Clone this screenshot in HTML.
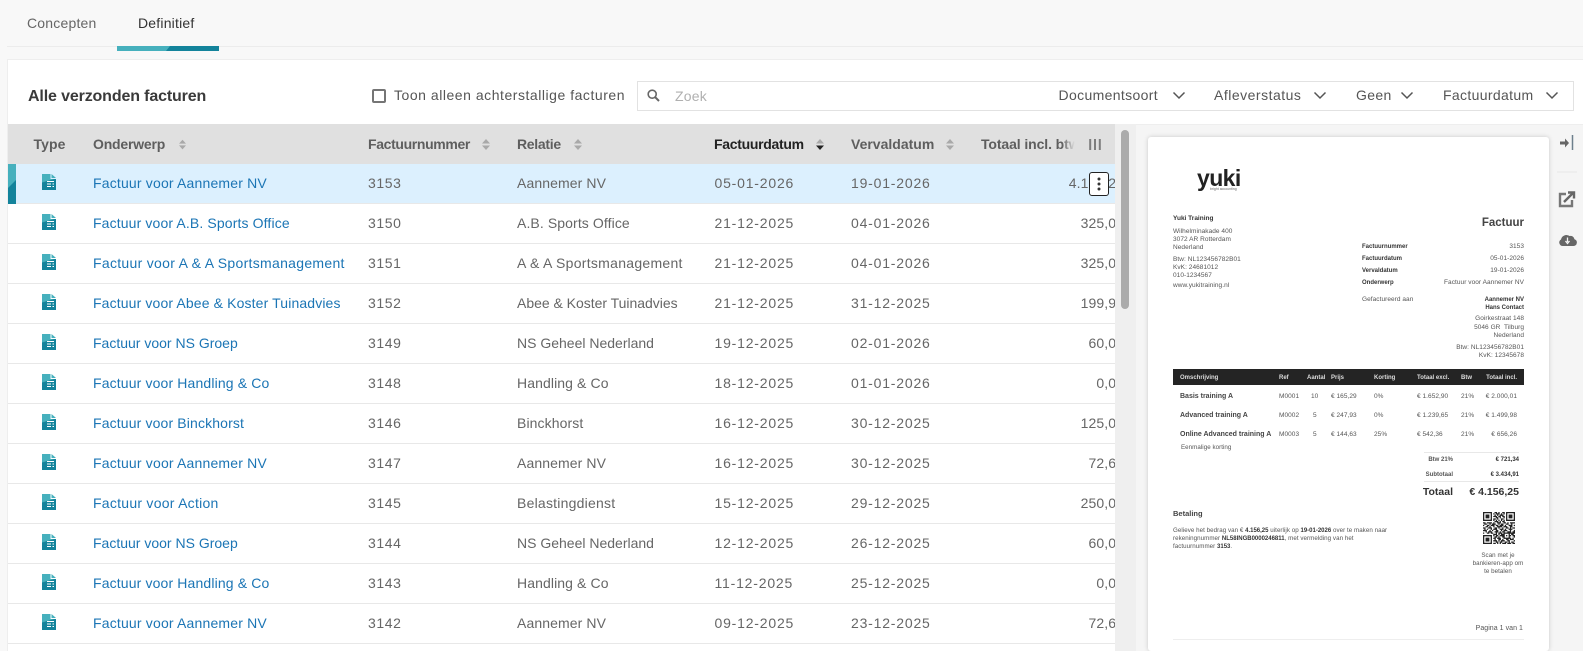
<!DOCTYPE html>
<html><head><meta charset="utf-8"><style>
html,body{margin:0;padding:0;width:1583px;height:651px;overflow:hidden;background:#f8f8f8;font-family:"Liberation Sans",sans-serif}
body{position:relative}
.tab{position:absolute;font-size:14px;top:15px;line-height:17px;white-space:nowrap}
.r{position:absolute;left:8px;width:1107px;height:39px;border-bottom:1px solid #e8e8e8;background:#fff;overflow:hidden;font-size:14px;line-height:39px;color:#666;letter-spacing:.1px}
.r span{position:absolute;top:0;white-space:nowrap}
.r svg{position:absolute;left:34px;top:10px}
.l{left:85px;color:#1b75b5}.n{left:360px;letter-spacing:.6px}.c{left:509px}.d{left:706.500px;letter-spacing:.8px}.v{left:843px;letter-spacing:.8px}.m{right:-9px}
.h{position:absolute;top:136px;font-size:14px;font-weight:bold;color:#5e5e5e;line-height:17px;white-space:nowrap}
.s{position:absolute;top:139px}
.t{position:absolute;top:87px;font-size:14px;line-height:17px;color:#555;white-space:nowrap;letter-spacing:.35px}
#doc{position:absolute;left:0;top:.6px;width:1583px;height:651px;filter:blur(.35px);color:#555;font-size:6.500px;letter-spacing:.05px}
#doc div{position:absolute;white-space:nowrap;line-height:8px}
.b{font-weight:bold;color:#333;font-size:6px;letter-spacing:0}
.th{color:#ddd;font-weight:bold;font-size:6px;letter-spacing:0}
.p{font-size:6.200px}
</style></head><body>
<svg width="0" height="0" style="position:absolute"><defs>
<linearGradient id="g" x1="0" y1="0" x2=".25" y2="1"><stop offset=".48" stop-color="#46b0bd"/><stop offset=".52" stop-color="#13839b"/></linearGradient>
<symbol id="i" viewBox="0 0 14 16"><path d="M0 0H8.500V5H14V16H0Z" fill="url(#g)"/><path d="M9.500 0L14 4H9.500Z" fill="#46b0bd"/><path d="M5 7.500H12M5 10H9M10.500 10H12M5 12.500H9M10.500 12.500H12" stroke="#fff" stroke-width="1"/></symbol>
<symbol id="so" viewBox="0 0 8 11"><path d="M4 0L8 4.500H0ZM0 6.500H8L4 11Z" fill="#a9a9a9"/></symbol>
</defs></svg>

<div style="position:absolute;left:7px;top:46px;width:1576px;height:1px;background:#ececec"></div>
<div class="tab" style="left:27px;color:#666;letter-spacing:.2px">Concepten</div>
<div class="tab" style="left:138px;color:#333;letter-spacing:.2px">Definitief</div>
<svg style="position:absolute;left:117px;top:46px" width="102" height="5"><rect width="102" height="5" fill="#13839b"/><path d="M0 0H53L49 5H0Z" fill="#46b0bd"/></svg>

<div style="position:absolute;left:8px;top:59px;width:1575px;height:65px;background:#fff;border-top:1px solid #eee;box-sizing:border-box"></div>
<div style="position:absolute;left:7px;top:59px;width:1px;height:592px;background:#eee"></div>
<div style="position:absolute;left:28px;top:87px;font-size:16px;line-height:19px;font-weight:bold;color:#3a3a3a;letter-spacing:-.14px;white-space:nowrap">Alle verzonden facturen</div>
<div style="position:absolute;left:372px;top:89px;width:14px;height:14px;box-sizing:border-box;border:2px solid #757575;border-radius:2px;background:#fff"></div>
<div class="t" style="left:394px;letter-spacing:.53px">Toon alleen achterstallige facturen</div>
<div style="position:absolute;left:637px;top:81px;width:937px;height:30px;box-sizing:border-box;border:1px solid #e2e2e2;background:#fff"></div>
<svg style="position:absolute;left:647px;top:89px" width="13" height="13" viewBox="0 0 13 13"><circle cx="5.200" cy="5.200" r="4" fill="none" stroke="#666" stroke-width="1.600"/><path d="M8.200 8.200L12 12" stroke="#666" stroke-width="2"/></svg>
<div class="t" style="left:675px;top:88px;color:#b0b0b0;letter-spacing:.2px">Zoek</div>
<div class="t" style="left:1058.500px">Documentsoort</div>
<div class="t" style="left:1214px;letter-spacing:.5px">Afleverstatus</div>
<div class="t" style="left:1356px">Geen</div>
<div class="t" style="left:1443px">Factuurdatum</div>
<svg style="position:absolute;left:0;top:0" width="1583" height="124"><path d="M1173.500 92.500L1179 98L1184.500 92.500M1314.500 92.500L1320 98L1325.500 92.500M1401.500 92.500L1407 98L1412.500 92.500M1546.500 92.500L1552 98L1557.500 92.500" fill="none" stroke="#555" stroke-width="1.500"/></svg>

<div style="position:absolute;left:8px;top:124px;width:1107px;height:40px;background:#e0e0e0"></div>
<div class="h" style="left:33.500px;letter-spacing:.1px">Type</div>
<div class="h" style="left:93px;letter-spacing:-.2px">Onderwerp</div>
<svg class="s" style="left:179px" width="7" height="11"><use href="#so"/></svg>
<div class="h" style="left:368px;letter-spacing:-.35px">Factuurnummer</div>
<svg class="s" style="left:482px" width="8" height="11"><use href="#so"/></svg>
<div class="h" style="left:517px;letter-spacing:-.3px">Relatie</div>
<svg class="s" style="left:574px" width="8" height="11"><use href="#so"/></svg>
<div class="h" style="left:714px;color:#222;letter-spacing:-.3px">Factuurdatum</div>
<svg style="position:absolute;left:816px;top:139px" width="8" height="11" viewBox="0 0 8 11"><path d="M4 0L8 4.500H0Z" fill="#a9a9a9"/><path d="M0 6.500H8L4 11Z" fill="#222"/></svg>
<div class="h" style="left:851px">Vervaldatum</div>
<svg class="s" style="left:946px" width="8" height="11"><use href="#so"/></svg>
<div class="h" style="left:981px;width:96px;overflow:hidden;letter-spacing:-.1px">Totaal incl. btw</div>
<div style="position:absolute;left:1062px;top:126px;width:16px;height:36px;background:linear-gradient(90deg,rgba(224,224,224,0),#e0e0e0 80%)"></div>
<svg style="position:absolute;left:1089px;top:139px" width="12" height="11"><path d="M1.200 0V11M6 0V11M10.800 0V11" stroke="#7d7d7d" stroke-width="2"/></svg>

<div class="r" style="top:164px;background:#dcf0fe"><svg width="14" height="16"><use href="#i"/></svg><span class="l" style="letter-spacing:.18px">Factuur voor Aannemer NV</span><span class="n">3153</span><span class="c">Aannemer NV</span><span class="d">05-01-2026</span><span class="v">19-01-2026</span><span class="m">4.156,25</span></div>
<div class="r" style="top:204px"><svg width="14" height="16"><use href="#i"/></svg><span class="l" style="letter-spacing:.13px">Factuur voor A.B. Sports Office</span><span class="n">3150</span><span class="c">A.B. Sports Office</span><span class="d">21-12-2025</span><span class="v">04-01-2026</span><span class="m">325,00</span></div>
<div class="r" style="top:244px"><svg width="14" height="16"><use href="#i"/></svg><span class="l" style="letter-spacing:.3px">Factuur voor A &amp; A Sportsmanagement</span><span class="n">3151</span><span class="c" style="letter-spacing:.28px">A &amp; A Sportsmanagement</span><span class="d">21-12-2025</span><span class="v">04-01-2026</span><span class="m">325,00</span></div>
<div class="r" style="top:284px"><svg width="14" height="16"><use href="#i"/></svg><span class="l" style="letter-spacing:.13px">Factuur voor Abee &amp; Koster Tuinadvies</span><span class="n">3152</span><span class="c" style="letter-spacing:-.02px">Abee &amp; Koster Tuinadvies</span><span class="d">21-12-2025</span><span class="v">31-12-2025</span><span class="m">199,95</span></div>
<div class="r" style="top:324px"><svg width="14" height="16"><use href="#i"/></svg><span class="l" style="letter-spacing:0">Factuur voor NS Groep</span><span class="n">3149</span><span class="c" style="letter-spacing:0">NS Geheel Nederland</span><span class="d">19-12-2025</span><span class="v">02-01-2026</span><span class="m">60,00</span></div>
<div class="r" style="top:364px"><svg width="14" height="16"><use href="#i"/></svg><span class="l" style="letter-spacing:.14px">Factuur voor Handling &amp; Co</span><span class="n">3148</span><span class="c">Handling &amp; Co</span><span class="d">18-12-2025</span><span class="v">01-01-2026</span><span class="m">0,00</span></div>
<div class="r" style="top:404px"><svg width="14" height="16"><use href="#i"/></svg><span class="l" style="letter-spacing:.14px">Factuur voor Binckhorst</span><span class="n">3146</span><span class="c">Binckhorst</span><span class="d">16-12-2025</span><span class="v">30-12-2025</span><span class="m">125,00</span></div>
<div class="r" style="top:444px"><svg width="14" height="16"><use href="#i"/></svg><span class="l" style="letter-spacing:.18px">Factuur voor Aannemer NV</span><span class="n">3147</span><span class="c">Aannemer NV</span><span class="d">16-12-2025</span><span class="v">30-12-2025</span><span class="m">72,60</span></div>
<div class="r" style="top:484px"><svg width="14" height="16"><use href="#i"/></svg><span class="l" style="letter-spacing:.26px">Factuur voor Action</span><span class="n">3145</span><span class="c" style="letter-spacing:.23px">Belastingdienst</span><span class="d">15-12-2025</span><span class="v">29-12-2025</span><span class="m">250,00</span></div>
<div class="r" style="top:524px"><svg width="14" height="16"><use href="#i"/></svg><span class="l" style="letter-spacing:0">Factuur voor NS Groep</span><span class="n">3144</span><span class="c" style="letter-spacing:0">NS Geheel Nederland</span><span class="d">12-12-2025</span><span class="v">26-12-2025</span><span class="m">60,00</span></div>
<div class="r" style="top:564px"><svg width="14" height="16"><use href="#i"/></svg><span class="l" style="letter-spacing:.14px">Factuur voor Handling &amp; Co</span><span class="n">3143</span><span class="c">Handling &amp; Co</span><span class="d">11-12-2025</span><span class="v">25-12-2025</span><span class="m">0,00</span></div>
<div class="r" style="top:604px"><svg width="14" height="16"><use href="#i"/></svg><span class="l" style="letter-spacing:.18px">Factuur voor Aannemer NV</span><span class="n">3142</span><span class="c">Aannemer NV</span><span class="d">09-12-2025</span><span class="v">23-12-2025</span><span class="m">72,60</span></div>
<div style="position:absolute;left:8px;top:644px;width:1107px;height:7px;background:#fff"></div>

<svg style="position:absolute;left:8px;top:164px" width="8" height="40"><rect width="8" height="40" fill="#13839b"/><path d="M0 0H8V16L0 24Z" fill="#46b0bd"/></svg>
<div style="position:absolute;left:1089px;top:172px;width:20px;height:24px;box-sizing:border-box;border:1px solid #222;border-radius:3px;background:#fff"></div>
<svg style="position:absolute;left:1097px;top:177px" width="4" height="14"><circle cx="2" cy="2" r="1.500" fill="#333"/><circle cx="2" cy="7" r="1.500" fill="#333"/><circle cx="2" cy="12" r="1.500" fill="#333"/></svg>

<div style="position:absolute;left:1115px;top:124px;width:21px;height:527px;background:#efefef"></div>
<div style="position:absolute;left:1121px;top:130px;width:8px;height:179px;border-radius:4px;background:#ababab"></div>
<div style="position:absolute;left:1136px;top:124px;width:447px;height:527px;background:#f5f5f5;border-top:1px solid #eee;box-sizing:border-box"></div>
<div style="position:absolute;left:1148px;top:137px;width:401px;height:514px;background:#fff;border-radius:3px;box-shadow:0 0 5px rgba(0,0,0,.18)"></div>

<div id="doc">
<div style="left:1197px;top:165px;font-size:23px;line-height:24px;font-weight:bold;color:#222;letter-spacing:-.6px">yuki</div>
<div style="left:1210px;top:185px;font-size:3.500px;line-height:6px;color:#666;letter-spacing:0">bright accounting</div>
<div class="b" style="left:1173px;top:214px;font-size:6.500px">Yuki Training</div>
<div style="left:1173px;top:227px">Wilhelminakade 400</div>
<div style="left:1173px;top:235px">3072 AR Rotterdam</div>
<div style="left:1173px;top:243px">Nederland</div>
<div style="left:1173px;top:255px">Btw: NL123456782B01</div>
<div style="left:1173px;top:263px">KvK: 24681012</div>
<div style="left:1173px;top:271px">010-1234567</div>
<div style="left:1173px;top:281px">www.yukitraining.nl</div>
<div style="right:59px;top:216px;font-size:11.500px;line-height:12px;font-weight:bold;color:#444;letter-spacing:0">Factuur</div>
<div class="b" style="left:1362px;top:242px">Factuurnummer</div>
<div class="b" style="left:1362px;top:254px">Factuurdatum</div>
<div class="b" style="left:1362px;top:266px">Vervaldatum</div>
<div class="b" style="left:1362px;top:278px">Onderwerp</div>
<div style="left:1362px;top:295px">Gefactureerd aan</div>
<div style="right:59px;top:242px">3153</div>
<div style="right:59px;top:254px">05-01-2026</div>
<div style="right:59px;top:266px">19-01-2026</div>
<div style="right:59px;top:278px">Factuur voor Aannemer NV</div>
<div class="b" style="right:59px;top:295px">Aannemer NV</div>
<div class="b" style="right:59px;top:303px">Hans Contact</div>
<div style="right:59px;top:314px">Goirkestraat 148</div>
<div style="right:59px;top:323px">5046 GR&nbsp; Tilburg</div>
<div style="right:59px;top:331px">Nederland</div>
<div style="right:59px;top:343px">Btw: NL123456782B01</div>
<div style="right:59px;top:351px">KvK: 12345678</div>

<div style="left:1173px;top:368.400px;width:351px;height:16px;background:#242424"></div>
<div class="th" style="left:1180px;top:373px">Omschrijving</div>
<div class="th" style="left:1279px;top:373px">Ref</div>
<div class="th" style="left:1307px;top:373px">Aantal</div>
<div class="th" style="left:1331px;top:373px">Prijs</div>
<div class="th" style="left:1374px;top:373px">Korting</div>
<div class="th" style="left:1417px;top:373px">Totaal excl.</div>
<div class="th" style="left:1461px;top:373px">Btw</div>
<div class="th" style="right:66px;top:373px">Totaal incl.</div>

<div class="b" style="left:1180px;top:392px;font-size:7px;color:#444">Basis training A</div>
<div style="left:1279px;top:392px">M0001</div><div style="left:1311px;top:392px">10</div><div style="left:1331px;top:392px">€ 165,29</div><div style="left:1374px;top:392px">0%</div><div style="left:1417px;top:392px">€ 1.652,90</div><div style="left:1461px;top:392px">21%</div><div style="right:66px;top:392px">€ 2.000,01</div>
<div class="b" style="left:1180px;top:411.500px;font-size:7px;color:#444">Advanced training A</div>
<div style="left:1279px;top:411.500px">M0002</div><div style="left:1313px;top:411.500px">5</div><div style="left:1331px;top:411.500px">€ 247,93</div><div style="left:1374px;top:411.500px">0%</div><div style="left:1417px;top:411.500px">€ 1.239,65</div><div style="left:1461px;top:411.500px">21%</div><div style="right:66px;top:411.500px">€ 1.499,98</div>
<div class="b" style="left:1180px;top:430.500px;font-size:7px;color:#444">Online Advanced training A</div>
<div style="left:1279px;top:430.500px">M0003</div><div style="left:1313px;top:430.500px">5</div><div style="left:1331px;top:430.500px">€ 144,63</div><div style="left:1374px;top:430.500px">25%</div><div style="left:1417px;top:430.500px">€ 542,36</div><div style="left:1461px;top:430.500px">21%</div><div style="right:66px;top:430.500px">€ 656,26</div>
<div class="p" style="left:1181px;top:443.500px">Eenmalige korting</div>

<div style="left:1424px;top:451px;width:95px;height:1px;background:#e8e8e8"></div>
<div class="b" style="right:130px;top:455px;color:#555">Btw 21%</div>
<div class="b" style="right:64px;top:455px">€ 721,34</div>
<div class="b" style="right:130px;top:470px;color:#555">Subtotaal</div>
<div class="b" style="right:64px;top:470px">€ 3.434,91</div>
<div style="left:1424px;top:480px;width:95px;height:1px;background:#e8e8e8"></div>
<div class="b" style="right:130px;top:485px;font-size:10.500px;line-height:12px">Totaal</div>
<div class="b" style="right:64px;top:485px;font-size:10.500px;line-height:12px">€ 4.156,25</div>

<div class="b" style="left:1173px;top:509px;font-size:7.500px;color:#444">Betaling</div>
<div class="p" style="left:1173px;top:526px">Gelieve het bedrag van € <b class="b">4.156,25</b> uiterlijk op <b class="b">19-01-2026</b> over te maken naar</div>
<div class="p" style="left:1173px;top:534px">rekeningnummer <b class="b">NL58INGB0000246811</b>, met vermelding van het</div>
<div class="p" style="left:1173px;top:542px">factuurnummer <b class="b">3153</b>.</div>

<svg style="position:absolute;left:1483px;top:511px" width="32" height="32" viewBox="0 0 25 25"><path fill="none" stroke="#222" d="M0 .5h7M9 .5h2M12 .5h1M15 .5h2M18 .5h7M0 1.500h1M6 1.500h1M8 1.500h1M10 1.500h3M14 1.500h1M16 1.500h1M18 1.500h1M24 1.500h1M0 2.500h1M2 2.500h3M6 2.500h1M9 2.500h1M11 2.500h1M13 2.500h3M18 2.500h1M20 2.500h3M24 2.500h1M0 3.500h1M2 3.500h3M6 3.500h1M8 3.500h3M12 3.500h2M15 3.500h2M18 3.500h1M20 3.500h3M24 3.500h1M0 4.500h1M2 4.500h3M6 4.500h1M10 4.500h2M13 4.500h1M16 4.500h1M18 4.500h1M20 4.500h3M24 4.500h1M0 5.500h1M6 5.500h1M8 5.500h2M11 5.500h1M14 5.500h2M18 5.500h1M24 5.500h1M0 6.500h7M8 6.500h1M10 6.500h1M12 6.500h1M14 6.500h1M16 6.500h1M18 6.500h7M9 7.500h3M13 7.500h1M15 7.500h2M0 8.500h2M3 8.500h4M8 8.500h1M11 8.500h3M16 8.500h2M19 8.500h1M21 8.500h4M1 9.500h2M5 9.500h1M7 9.500h3M12 9.500h1M14 9.500h2M18 9.500h2M22 9.500h1M0 10.500h1M3 10.500h2M6 10.500h3M10 10.500h2M13 10.500h3M17 10.500h1M20 10.500h3M24 10.500h1M2 11.500h2M5 11.500h1M8 11.500h1M11 11.500h4M16 11.500h3M21 11.500h2M0 12.500h2M4 12.500h3M9 12.500h2M12 12.500h1M15 12.500h1M18 12.500h2M21 12.500h1M23 12.500h2M1 13.500h1M3 13.500h1M6 13.500h1M8 13.500h3M13 13.500h3M17 13.500h1M20 13.500h3M0 14.500h3M5 14.500h1M7 14.500h1M10 14.500h2M14 14.500h1M16 14.500h3M21 14.500h1M24 14.500h1M2 15.500h1M4 15.500h3M9 15.500h3M13 15.500h1M15 15.500h2M19 15.500h3M23 15.500h2M0 16.500h1M3 16.500h2M6 16.500h2M10 16.500h1M12 16.500h3M16 16.500h9M8 17.500h3M12 17.500h1M14 17.500h2M16 17.500h1M20 17.500h1M22 17.500h2M0 18.500h7M8 18.500h1M10 18.500h2M13 18.500h3M16 18.500h1M18 18.500h1M20 18.500h2M23 18.500h2M0 19.500h1M6 19.500h1M9 19.500h2M12 19.500h1M15 19.500h2M20 19.500h1M24 19.500h1M0 20.500h1M2 20.500h3M6 20.500h1M8 20.500h2M11 20.500h3M16 20.500h6M23 20.500h1M0 21.500h1M2 21.500h3M6 21.500h1M9 21.500h1M12 21.500h2M15 21.500h1M18 21.500h2M21 21.500h3M0 22.500h1M2 22.500h3M6 22.500h1M8 22.500h3M12 22.500h1M14 22.500h3M19 22.500h2M24 22.500h1M0 23.500h1M6 23.500h1M10 23.500h2M13 23.500h2M17 23.500h2M20 23.500h1M22 23.500h2M0 24.500h7M8 24.500h2M11 24.500h1M13 24.500h1M15 24.500h3M19 24.500h3M23 24.500h2"/></svg>
<div class="p" style="left:1468px;top:551px;width:60px;text-align:center">Scan met je</div>
<div class="p" style="left:1468px;top:559px;width:60px;text-align:center">bankieren-app om</div>
<div class="p" style="left:1468px;top:567px;width:60px;text-align:center">te betalen</div>
<div style="right:60px;top:624px;font-size:7px">Pagina 1 van 1</div>
<div style="left:1173px;top:638px;width:351px;height:1px;background:#eee"></div>
</div>

<svg style="position:absolute;left:1556px;top:132px" width="24" height="120" viewBox="0 0 24 120"><path d="M4 9.500H9V6.500L13 11L9 15.500V12.500H4Z" fill="#666"/><path d="M16.500 3V18" stroke="#6d7f8c" stroke-width="1.500"/><path d="M1 40H21" stroke="#e8e8e8"/><path d="M10 62H4V74H16V68" fill="none" stroke="#777" stroke-width="2.400"/><path d="M8 70L16.500 61.500M12 60.500H18V66.500" fill="none" stroke="#666" stroke-width="2.400"/><path d="M7 114H17.500A3.500 3.500 0 0 0 18.500 107.200A4 4 0 0 0 13.500 104A5.500 5.500 0 0 0 5 107.500A3.500 3.500 0 0 0 7 114Z" fill="#666"/><path d="M11.500 105.500V110M9.500 109L11.500 111.500L13.500 109" fill="none" stroke="#f5f5f5" stroke-width="1.300"/></svg>
</body></html>
